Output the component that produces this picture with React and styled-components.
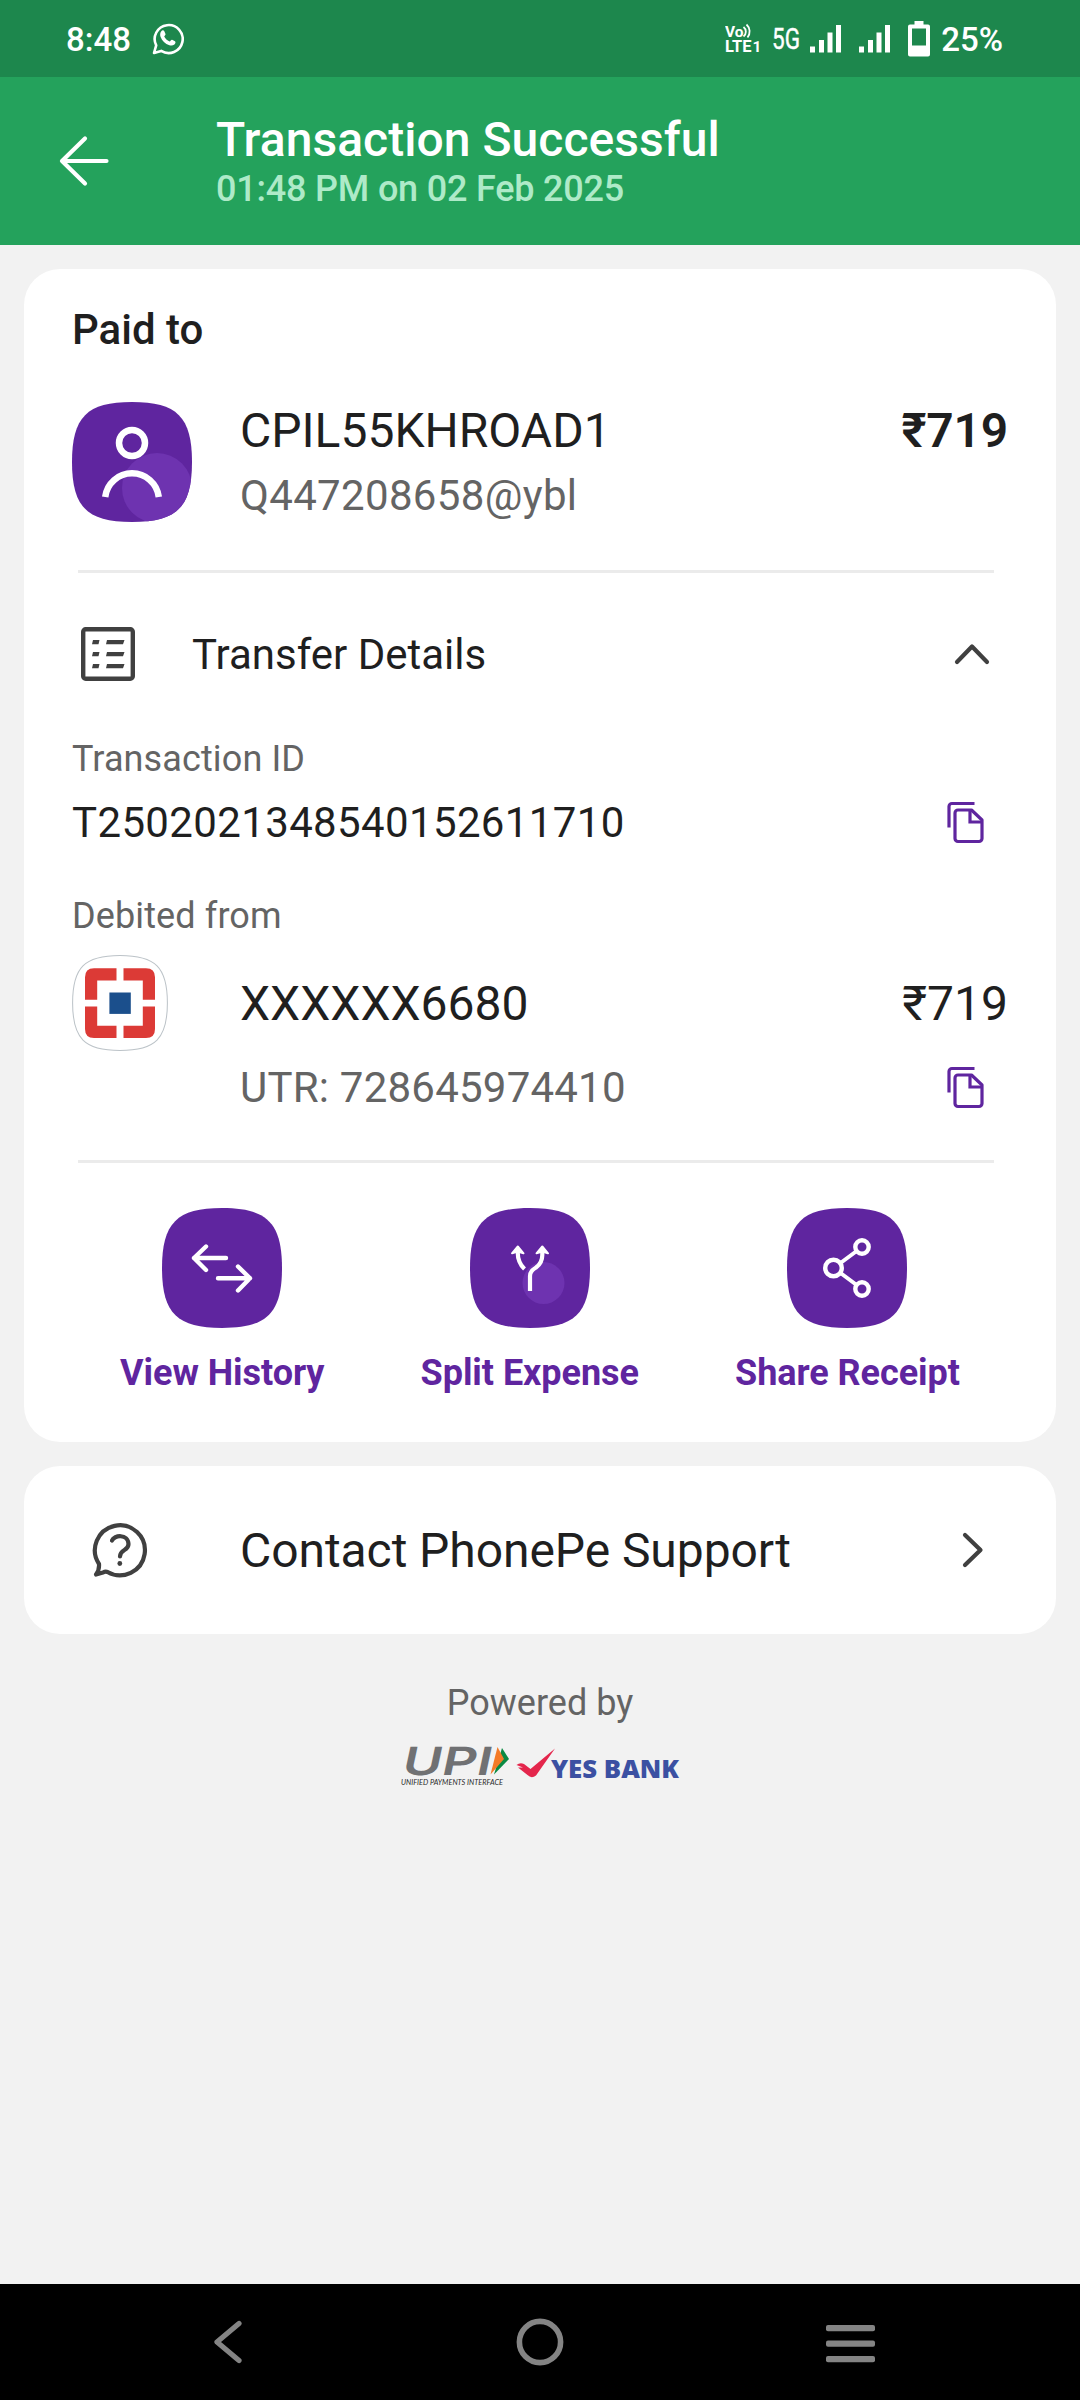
import React from "react";
import styled, { createGlobalStyle } from "styled-components";

const GlobalStyle = createGlobalStyle`
  * { box-sizing: border-box; }
  body { margin: 0; background: #f2f2f2; font-family: Roboto, "Noto Sans", sans-serif; }
  svg { display: block; flex: none; }
`;

const Screen = styled.div`
  width: 1080px;
  min-height: 2400px;
  display: flex;
  flex-direction: column;
  background: #f2f2f2;
  color: #1f1f1f;
`;

const StatusBar = styled.div`
  height: 77px;
  padding: 0 77px 0 66px;
  display: flex;
  align-items: center;
  justify-content: space-between;
  background: #1d874d;
  color: #fff;
`;

const StatusGroup = styled.div`
  display: flex;
  align-items: center;
`;

const StatusText = styled.span`
  font-size: 33px;
  line-height: 40px;
  font-weight: 500;
  margin-top: 2px;
`;

const StatusIcons = styled.div`
  display: flex;
  align-items: center;
  gap: ${(p) => p.$gap}px;
  margin-right: ${(p) => p.$right || 0}px;
`;

const Header = styled.header`
  height: 168px;
  padding-left: 58px;
  display: flex;
  align-items: center;
  gap: 105px;
  background: #24a25c;
  color: #fff;
`;

const HeaderText = styled.div`
  display: flex;
  flex-direction: column;
`;

const Title = styled.h1`
  margin: 0;
  font-size: 48px;
  line-height: 56px;
  font-weight: 500;
  letter-spacing: 0.04px;
`;

const Subtitle = styled.div`
  font-size: 36px;
  line-height: 42px;
  font-weight: 500;
  letter-spacing: -0.2px;
  color: #aeeac8;
`;

const Card = styled.section`
  margin: 24px 24px 0;
  padding: ${(p) => p.$padding};
  background: #fff;
  border-radius: 36px;
`;

const LINE_HEIGHTS = { 36: 42, 42: 50, 48: 58 };

const Text = styled.div`
  height: ${(p) => LINE_HEIGHTS[p.$size]}px;
  font-size: ${(p) => p.$size}px;
  line-height: ${(p) => LINE_HEIGHTS[p.$size]}px;
  font-weight: ${(p) => p.$weight || 400};
  letter-spacing: ${(p) => p.$spacing || 0}px;
  color: ${(p) => (p.$muted ? "#646464" : "#1f1f1f")};
  margin-top: ${(p) => p.$top || 0}px;
  padding-top: ${(p) => (p.$raised ? 0 : 1)}px;
  white-space: nowrap;
`;

const Row = styled.div`
  display: flex;
  align-items: ${(p) => p.$align || "center"};
  height: ${(p) => p.$height}px;
  margin-top: ${(p) => p.$top || 0}px;
  padding: 0 ${(p) => p.$right || 0}px 0 ${(p) => p.$left || 0}px;
  gap: ${(p) => p.$gap || 0}px;
`;

const Grow = styled.div`
  flex: 1;
`;

const Divider = styled.hr`
  height: 3px;
  margin: 48px 14px 0 6px;
  border: 0;
  background: #ebebeb;
`;

const Actions = styled.div`
  display: flex;
  justify-content: space-around;
  margin-top: 45px;
`;

const Action = styled.button`
  display: flex;
  flex-direction: column;
  align-items: center;
  gap: 24px;
  padding: 0;
  border: 0;
  background: none;
  font: 700 36px/42px Roboto, "Noto Sans", sans-serif;
  letter-spacing: -0.05px;
  color: #5f259f;
`;

const Footer = styled.footer`
  flex: 1;
  display: flex;
  flex-direction: column;
  align-items: center;
  padding-top: 47px;
`;

const Logos = styled.div`
  display: flex;
  gap: 6px;
  margin-top: 10px;
  padding-right: 8px;
`;

const NavBar = styled.nav`
  height: 116px;
  display: grid;
  grid-template-columns: repeat(3, 1fr);
  place-items: center;
  padding: 0 73px;
  background: #000;
`;

const SQUIRCLE =
  "M0 60C0 15 15 0 60 0C105 0 120 15 120 60C120 105 105 120 60 120C15 120 0 105 0 60Z";

const WhatsApp = () => (
  <svg width="32" height="33" viewBox="0 0 32 33">
    <path d="M2 31L4.2 23.4A14 14 0 1 1 9.2 28.9Z" fill="none" stroke="#fff" strokeWidth="2.6" strokeLinejoin="round" />
    <path d="M9.3 9.2c.8-1 2.3-1.2 2.9-.1l1.3 2.9c.3.8-1 1.9-1.3 2.6 1.2 2.3 2.9 3.9 5.4 4.9.7-.2 1.7-2 2.5-1.7l2.9 1.5c1 .6.4 2.4-.6 3.2-1.5 1.2-3.3 1.3-5 .7-4.3-1.4-7.3-4.2-8.8-8.2-.7-2-.6-4.3.7-5.8z" fill="#fff" />
  </svg>
);

const VoLte = () => (
  <svg width="38" height="44" viewBox="0 -7 38 44" fill="#fff" fontFamily="Roboto, sans-serif" fontWeight="700">
    <text x="0" y="13" fontSize="15.5" textLength="18.5" lengthAdjust="spacingAndGlyphs">Vo</text>
    <path d="M18.5 3a6 6 0 0 1 0 9.5M21.5 .5a9.5 9.5 0 0 1 1 13" fill="none" stroke="#fff" strokeWidth="1.8" />
    <text x="0" y="28" fontSize="16.5" textLength="26.5" lengthAdjust="spacingAndGlyphs">LTE</text>
    <text x="27.5" y="28" fontSize="15.5">1</text>
  </svg>
);

const FiveG = () => (
  <svg width="34" height="50" viewBox="-3 -10 34 50">
    <text x="0" y="25" fontSize="29" fontWeight="400" fill="#fff" stroke="#fff" strokeWidth=".4" fontFamily="Roboto, sans-serif" textLength="28" lengthAdjust="spacingAndGlyphs">5G</text>
  </svg>
);

const Signal = () => (
  <svg width="31" height="28" viewBox="0 0 31 28" fill="#fff">
    <rect x="0" y="21.5" width="5" height="6" />
    <rect x="9" y="15" width="5" height="12.5" />
    <rect x="17.5" y="7.5" width="5" height="20" />
    <rect x="26" y="0" width="5" height="27.5" />
  </svg>
);

const Battery = () => (
  <svg width="22" height="36" viewBox="0 0 22 36">
    <path fillRule="evenodd" fill="#fff" d="M6.5 0h9v3.5h4.5q2 0 2 2v28q0 2-2 2h-18q-2 0-2-2v-28q0-2 2-2h4.5zM4 7.5v17h14v-17z" />
  </svg>
);

const BackArrow = () => (
  <svg width="53" height="54" viewBox="0 0 53 54" fill="none" stroke="#fff" strokeWidth="4.2" strokeLinecap="round" strokeLinejoin="round">
    <path d="M27 4.5L4 27L27 49.5M4 27H48.5" />
  </svg>
);

const Person = () => (
  <svg width="120" height="120" viewBox="0 0 120 120">
    <clipPath id="avatar"><path d={SQUIRCLE} /></clipPath>
    <g clipPath="url(#avatar)">
      <rect width="120" height="120" fill="#5f259f" />
      <circle cx="85" cy="86" r="35" fill="#6e33b0" />
    </g>
    <circle cx="60" cy="41" r="13" fill="none" stroke="#fff" strokeWidth="6.5" />
    <path d="M33.2 95a27 27 0 0 1 53.6 0" fill="none" stroke="#fff" strokeWidth="6.5" />
  </svg>
);

const ListIcon = () => (
  <svg width="54" height="54" viewBox="0 0 54 54" fill="none" stroke="#404040" strokeWidth="4.4">
    <rect x="2.2" y="2.2" width="49.6" height="49.6" rx="2.5" />
    <path d="M12 13h6.5l-1 4.2H11zM26 13h17.500l-1.5 4.2H25zM12 25h6.5l-1 4.2H11zM26 25h17.5l-1.5 4.2H25zM12 37h6.5l-1 4.2H11zM26 37h17.5l-1.5 4.2H25z" fill="#404040" stroke="none" />
  </svg>
);

const ChevronUp = () => (
  <svg width="38" height="24" viewBox="0 0 38 24" fill="none" stroke="#404040" strokeWidth="4.2" strokeLinecap="round" strokeLinejoin="round">
    <path d="M4 20L19 4.5L34 20" />
  </svg>
);

const ChevronRight = () => (
  <svg width="24" height="38" viewBox="0 0 24 38" fill="none" stroke="#404040" strokeWidth="4.2" strokeLinecap="round" strokeLinejoin="round">
    <path d="M4 4L19.5 19L4 34" />
  </svg>
);

const CopyIcon = () => (
  <svg width="38" height="44" viewBox="0 0 38 44" fill="none" stroke="#5f259f" strokeWidth="3.2">
    <path d="M3 27.500V6.500a3 3 0 0 1 3-3H28.500" />
    <path d="M12 10H25.500L36 20V38.500a3 3 0 0 1-3 3H12a3 3 0 0 1-3-3V13a3 3 0 0 1 3-3z" strokeLinejoin="round" />
    <path d="M24 10V22H36" />
  </svg>
);

const BankLogo = () => (
  <svg width="96" height="96" viewBox="0 0 96 96">
    <path d={SQUIRCLE} transform="translate(.6 .6) scale(.79)" fill="#fff" stroke="#bcc3c8" strokeWidth="1.3" />
    <g fill="#dc3a36">
      <path d="M44.5 13.3H22q-9 0-9 9v22.5h12.2V25.5h19.3z" />
      <path d="M51.5 13.3H74q9 0 9 9v22.5H70.8V25.5H51.5z" />
      <path d="M44.5 83H22q-9 0-9-9V51.5h12.2v19.3h19.3z" />
      <path d="M51.5 83H74q9 0 9-9V51.5H70.8v19.3H51.5z" />
    </g>
    <rect x="37.4" y="37.5" width="21.4" height="21.4" fill="#1b4f8c" />
  </svg>
);

const ActionTile = ({ children }) => (
  <svg width="120" height="120" viewBox="0 0 120 120" fill="none" stroke="#fff" strokeWidth="4.4" strokeLinecap="round" strokeLinejoin="round">
    <path d={SQUIRCLE} fill="#5f259f" stroke="none" />
    {children}
  </svg>
);

const HistoryIcon = () => (
  <ActionTile>
    <path d="M44 38.5L32 50L44 62M32 50H64M76 58.5L88 70.3L76 82.5M88 70.3H56" />
  </ActionTile>
);

const SplitIcon = () => (
  <ActionTile>
    <circle cx="73.5" cy="75" r="21" fill="#6e33b0" stroke="none" />
    <path d="M47.8 42Q47 54 54.5 61M72.3 42V47Q72.3 55 66 59.5Q60 63 60 68V83" strokeWidth="4.2" strokeLinecap="butt" />
    <path d="M47.8 38.5L53.5 45.3L47.8 43.5L42 45.3ZM72.3 38.5L78 45.3L72.3 43.5L66.5 45.3Z" fill="#fff" strokeWidth="2" />
  </ActionTile>
);

const ShareIcon = () => (
  <ActionTile>
    <circle cx="46.5" cy="60" r="8.3" />
    <circle cx="75" cy="39" r="6.7" />
    <circle cx="75" cy="81" r="6.7" />
    <path d="M53.5 55L69 43.5M53.5 65L69 76.5" strokeWidth="4" />
  </ActionTile>
);

const SupportIcon = () => (
  <svg width="56" height="56" viewBox="0 0 56 56" fill="none" stroke="#404040" strokeWidth="4.2" strokeLinecap="round" strokeLinejoin="round">
    <path d="M7 42A25 25 0 1 1 15.5 50Q13.5 49 11 50.5L4 52.5Q7.5 48 7 42z" />
    <path d="M20 18.5C22 13 36 11.5 36.5 22C36.7 29 28 27 28 34.5" />
    <circle cx="27.8" cy="41.5" r="2.4" fill="#404040" stroke="none" />
  </svg>
);

const UpiLogo = () => (
  <svg width="118" height="62" viewBox="-8 -12 118 62">
    <text x="0" y="30" transform="skewX(-12) translate(7 0)" fontFamily="Inter, sans-serif" fontWeight="600" fontSize="39" fill="#707173" textLength="89" lengthAdjust="spacingAndGlyphs">UPI</text>
    <path d="M102 3L109 14L94 29.5Z" fill="#0a8a43" />
    <path d="M97.5 2L104 14L90.5 29.5Z" fill="#f47b28" />
    <text x="1" y="40" fontFamily="Lato, sans-serif" fontStyle="italic" fontWeight="400" fontSize="8.3" fill="#2a2a2a" textLength="102" lengthAdjust="spacingAndGlyphs">UNIFIED PAYMENTS INTERFACE</text>
  </svg>
);

const YesBankLogo = () => (
  <svg width="164" height="62" viewBox="0 -12 164 62">
    <path d="M.5 20Q4 17 8 19L14.5 24L39 3.5L20 30.5Q15.5 34 11.5 30L2 22.5L7 22.5Z" fill="#e4264c" />
    <text x="35" y="32.5" fontFamily="Open Sans, sans-serif" fontWeight="800" fontSize="25" fill="#3b50a2" textLength="128" lengthAdjust="spacingAndGlyphs">YES BANK</text>
  </svg>
);

const NavBack = () => (
  <svg width="34" height="48" viewBox="0 0 34 48" fill="none" stroke="#848484" strokeWidth="5.2" strokeLinecap="round" strokeLinejoin="round">
    <path d="M27 5.5L5 24L27 42.5" />
  </svg>
);

const NavHome = () => (
  <svg width="48" height="48" viewBox="0 0 48 48">
    <circle cx="24" cy="24" r="20.6" fill="none" stroke="#848484" strokeWidth="5.6" />
  </svg>
);

const NavMenu = () => (
  <svg width="50" height="48" viewBox="0 0 50 48" fill="#848484">
    <rect y="7" width="49" height="6.2" rx="2" />
    <rect y="22.5" width="49" height="6.2" rx="2" />
    <rect y="38" width="49" height="6.2" rx="2" />
  </svg>
);

export default function App() {
  return (
    <>
      <GlobalStyle />
      <Screen>
        <StatusBar>
          <StatusIcons $gap={21}>
            <StatusText>8:48</StatusText>
            <WhatsApp />
          </StatusIcons>
          <StatusGroup>
            <StatusIcons $gap={6} $right={7}>
              <VoLte />
              <FiveG />
            </StatusIcons>
            <StatusIcons $gap={18} $right={11}>
              <Signal />
              <Signal />
              <Battery />
            </StatusIcons>
            <StatusText>25%</StatusText>
          </StatusGroup>
        </StatusBar>
        <Header>
          <BackArrow />
          <HeaderText>
            <Title>Transaction Successful</Title>
            <Subtitle>01:48 PM on 02 Feb 2025</Subtitle>
          </HeaderText>
        </Header>
        <Card $padding="36px 48px 48px">
          <Text $size={42} $weight={500} $raised>Paid to</Text>
          <Row $height={120} $top={47} $gap={48} $align="flex-start">
            <Person />
            <Grow>
              <Text $size={48} $raised>CPIL55KHROAD1</Text>
              <Text $size={42} $muted $top={10} $spacing={0.33}>Q447208658@ybl</Text>
            </Grow>
            <Text $size={48} $weight={600} $raised $spacing={-0.2}>₹719</Text>
          </Row>
          <Divider />
          <Row $height={60} $top={51} $left={9} $right={17} $gap={57}>
            <ListIcon />
            <Grow><Text $size={42}>Transfer Details</Text></Grow>
            <ChevronUp />
          </Row>
          <Text $size={36} $muted $top={53} $spacing={0.12}>Transaction ID</Text>
          <Row $height={50} $top={18} $right={24}>
            <Grow><Text $size={42} $spacing={0.36}>T2502021348540152611710</Text></Grow>
            <CopyIcon />
          </Row>
          <Text $size={36} $muted $top={47} $spacing={0.12}>Debited from</Text>
          <Row $height={96} $top={19} $gap={72}>
            <BankLogo />
            <Grow><Text $size={48}>XXXXXX6680</Text></Grow>
            <Text $size={48}>₹719</Text>
          </Row>
          <Row $height={50} $top={11} $left={168} $right={24}>
            <Grow><Text $size={42} $muted $spacing={0.22}>UTR: 728645974410</Text></Grow>
            <CopyIcon />
          </Row>
          <Divider />
          <Actions>
            <Action><HistoryIcon />View History</Action>
            <Action><SplitIcon />Split Expense</Action>
            <Action><ShareIcon />Share Receipt</Action>
          </Actions>
        </Card>
        <Card $padding="0 48px">
          <Row $height={168} $left={20} $right={23} $gap={92}>
            <SupportIcon />
            <Grow><Text $size={48} $spacing={-0.07}>Contact PhonePe Support</Text></Grow>
            <ChevronRight />
          </Row>
        </Card>
        <Footer>
          <Text $size={36} $muted>Powered by</Text>
          <Logos>
            <UpiLogo />
            <YesBankLogo />
          </Logos>
        </Footer>
        <NavBar>
          <NavBack />
          <NavHome />
          <NavMenu />
        </NavBar>
      </Screen>
    </>
  );
}
